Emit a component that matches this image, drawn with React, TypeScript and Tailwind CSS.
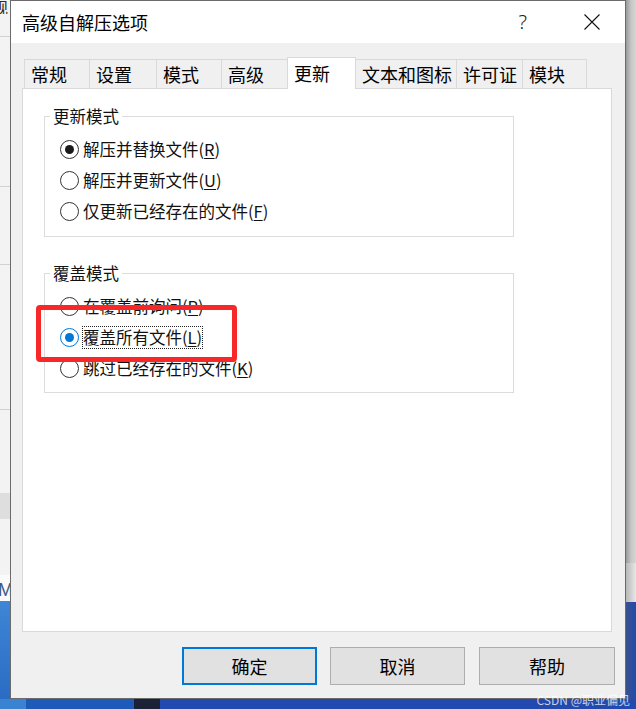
import React from "react";

// 高级自解压选项 dialog (WinRAR SFX options, "更新" tab)

const tabs = [
  { label: "常规", cls: "w-[65px] border-l" },
  { label: "设置", cls: "w-[67px] border-l" },
  { label: "模式", cls: "w-[65px] border-l" },
  { label: "高级", cls: "w-[66px] border-l" },
  { label: "更新", cls: "w-[69px]", active: true },
  { label: "文本和图标", cls: "w-[100px] pl-[5px]" },
  { label: "许可证", cls: "w-[66px] border-l" },
  { label: "模块", cls: "w-[65px] border-x" },
];

function Radio({ checked, focused }: { checked?: boolean; focused?: boolean }) {
  const ring = focused ? "border-[#0078d7]" : "border-[#333333]";
  const dot = focused ? "bg-[#0078d7]" : "bg-[#1a1a1a]";
  return (
    <span
      className={`flex h-[19px] w-[19px] shrink-0 items-center justify-center rounded-full border-[1.5px] bg-white ${ring}`}
    >
      {checked && <span className={`h-[9px] w-[9px] rounded-full ${dot}`} />}
    </span>
  );
}

function Option({
  label,
  hotkey,
  checked,
  focused,
}: {
  label: string;
  hotkey: string;
  checked?: boolean;
  focused?: boolean;
}) {
  return (
    <div className="flex h-[31px] items-center pl-[15px]">
      <Radio checked={checked} focused={focused} />
      <span
        className={`ml-[3px] border border-dotted text-[16.5px] leading-[21px] text-[#111] ${
          focused ? "border-[#222]" : "border-transparent"
        }`}
      >
        {label}(<span className="underline underline-offset-2">{hotkey}</span>)
      </span>
    </div>
  );
}

function Group({
  title,
  className,
  children,
}: {
  title: string;
  className: string;
  children: React.ReactNode;
}) {
  return (
    <fieldset className={`ml-[21px] w-[470px] border border-[#dcdcdc] ${className}`}>
      <legend className="ml-[5px] px-[3px] text-[16.5px] leading-[20px] text-[#111]">
        {title}
      </legend>
      {children}
    </fieldset>
  );
}

function TitleBar() {
  return (
    <div className="flex h-[42px] items-center bg-white pl-[11px] pr-[25px]">
      <span className="text-[18px] leading-[22px] text-black">高级自解压选项</span>
      <span className="ml-auto font-['Noto_Sans',sans-serif] text-[20px] font-light leading-none text-[#222]">
        ?
      </span>
      <svg className="ml-[57px]" width="16" height="16" viewBox="0 0 16 16">
        <path d="M0.5 0.5 L15.5 15.5 M15.5 0.5 L0.5 15.5" stroke="#111" strokeWidth="1.1" />
      </svg>
    </div>
  );
}

function TabStrip() {
  return (
    <div className="relative z-10 ml-[13px] flex h-[31px] items-end">
      {tabs.map((t) =>
        t.active ? (
          <div
            key={t.label}
            className="relative z-10 mb-[-1px] flex h-[32px] w-[69px] items-center border-x border-t border-[#d9d9d9] bg-white pb-[2px] pl-[6px] text-[18px] leading-[22px] text-black"
          >
            {t.label}
          </div>
        ) : (
          <div
            key={t.label}
            className={`flex h-[29px] items-center border-t border-[#d9d9d9] bg-[#f0f0f0] pl-[6px] text-[18px] leading-[22px] text-black ${t.cls}`}
          >
            {t.label}
          </div>
        ),
      )}
    </div>
  );
}

function Panel() {
  return (
    <div className="ml-[11px] h-[544px] w-[590px] border border-[#d9d9d9] bg-white">
      <Group title="更新模式" className="mt-[17px] pb-[9px] pt-[8px]">
        <Option label="解压并替换文件" hotkey="R" checked />
        <Option label="解压并更新文件" hotkey="U" />
        <Option label="仅更新已经存在的文件" hotkey="F" />
      </Group>
      <Group title="覆盖模式" className="mt-[26px] pb-[8px] pt-[8px]">
        <Option label="在覆盖前询问" hotkey="P" />
        <Option label="覆盖所有文件" hotkey="L" checked focused />
        <Option label="跳过已经存在的文件" hotkey="K" />
      </Group>
    </div>
  );
}

function Buttons() {
  return (
    <div className="mt-[15px] flex justify-end pr-[10px]">
      <button className="h-[38px] w-[135px] border-2 border-[#0078d7] bg-[#e1e1e1] text-[18px] leading-[22px] text-black">
        确定
      </button>
      <button className="ml-[13px] h-[38px] w-[135px] border border-[#adadad] bg-[#e1e1e1] text-[18px] leading-[22px] text-black">
        取消
      </button>
      <button className="ml-[14px] h-[38px] w-[136px] border border-[#adadad] bg-[#e1e1e1] text-[18px] leading-[22px] text-black">
        帮助
      </button>
    </div>
  );
}

function Dialog() {
  return (
    <div className="flex w-[616px] shrink-0 flex-col border border-[#6b6b6b] bg-[#f0f0f0]">
      <TitleBar />
      <div className="flex flex-1 flex-col pt-[14px]">
        <TabStrip />
        <Panel />
        <Buttons />
      </div>
    </div>
  );
}

// bits of the window behind the dialog
function LeftStrip() {
  return (
    <div className="flex w-[10px] shrink-0 flex-col bg-[#f3f3f3]">
      <div className="h-[14px] overflow-hidden whitespace-nowrap text-[16px] leading-[14px] text-[#2a2a2a]">
        <span className="ml-[-8px]">规</span>
      </div>
      <div className="h-[22px]" />
      <div className="h-px bg-[#d2d2d2]" />
      <div className="h-[149px]" />
      <div className="h-px bg-[#d2d2d2]" />
      <div className="h-[77px]" />
      <div className="h-px bg-[#d2d2d2]" />
      <div className="h-[144px]" />
      <div className="h-px bg-[#d2d2d2]" />
      <div className="h-[83px]" />
      <div className="h-[26px] bg-[#dedede]" />
      <div className="h-[56px]" />
      <div className="h-[26px] overflow-hidden whitespace-nowrap bg-[#fbfbfb] text-[18px] leading-[26px] text-[#3d5a86]">
        <span className="ml-[-2px] font-['Liberation_Sans',sans-serif]">M</span>
      </div>
      <div className="flex-1 bg-linear-to-b from-[#3f86d6] to-[#2a6cc4]" />
    </div>
  );
}

function RightStrip() {
  return (
    <div className="flex w-[10px] shrink-0 flex-col">
      <div className="h-[563px] bg-linear-to-r from-[#9a9a9a] via-[#c6c6c6] to-[#d6d6d6]" />
      <div className="h-[39px] bg-linear-to-r from-[#b8b8b8] to-[#e8e8e8]" />
      <div className="flex-1 bg-linear-to-r from-[#3a4f8c] to-[#1d4cb0]" />
    </div>
  );
}

function DesktopEdge() {
  return (
    <div className="flex h-[10px]">
      <div className="w-[26px] bg-[#3a82d2]" />
      <div className="w-[108px] bg-[#1e5ab8]" />
      <div className="w-[26px] bg-[#1b2238]" />
      <div className="flex-1 bg-[#2249ad]" />
    </div>
  );
}

export default function App() {
  return (
    <div className="relative flex h-[709px] w-[636px] flex-col overflow-hidden bg-[#2249ad] font-['Noto_Sans_CJK_SC',sans-serif]">
      <div className="flex h-[699px]">
        <LeftStrip />
        <Dialog />
        <RightStrip />
      </div>
      <DesktopEdge />
      {/* red annotation box */}
      <div className="absolute left-[36px] top-[305px] h-[57px] w-[201px] rounded-[4px] border-[5px] border-[#f82828]" />
      <div className="absolute bottom-[2px] right-[6px] text-[12px] leading-[14px] text-white/75">
        CSDN @职业偏见
      </div>
    </div>
  );
}
